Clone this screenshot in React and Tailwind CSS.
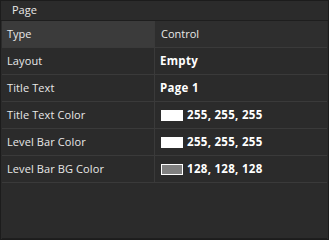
export default function App() {
  const rows = [
    { label: "Layout", value: "Empty" },
    { label: "Title Text", value: "Page 1" },
    { label: "Title Text Color", value: "255, 255, 255", swatch: "bg-white" },
    { label: "Level Bar Color", value: "255, 255, 255", swatch: "bg-white" },
    { label: "Level Bar BG Color", value: "128, 128, 128", swatch: "bg-[#808080]" },
  ];

  return (
    <div
      className="w-[329px] h-[240px] bg-[#2b2b2b] text-[11px] text-[#e8e8e8] flex flex-col border border-[#1c1c1c] overflow-hidden"
      style={{ fontFamily: '"Open Sans", "Noto Sans", sans-serif' }}
    >
      {/* Title bar */}
      <div className="h-[20px] flex items-center pl-[11px] border-b border-[#1e1e1e] shrink-0">
        Page
      </div>

      {/* Property grid */}
      <div className="mx-px flex-1 border-b border-[#1e1e1e]">
        <div className="grid grid-cols-[152px_1fr] h-[27px] border-b border-[#3a3a3a]">
          <div className="bg-[#3b3b3b] flex items-center pl-[5px]">Type</div>
          <div className="bg-[#2e2e2e] border-l border-[#3a3a3a] flex items-center pl-[6px]">Control</div>
        </div>
        {rows.map((r) => (
          <div key={r.label} className="grid grid-cols-[152px_1fr] h-[27px] border-b border-[#3a3a3a]">
            <div className="flex items-center pl-[5px] tracking-[0.1px]">{r.label}</div>
            <div className="border-l border-[#3a3a3a] flex items-center pl-[5px] font-bold text-white gap-[4px] text-[11.5px] tracking-[0.3px]">
              {r.swatch && <span className={`w-[22px] h-[11px] border border-white ml-px ${r.swatch}`} />}
              {r.value}
            </div>
          </div>
        ))}
      </div>
    </div>
  );
}
